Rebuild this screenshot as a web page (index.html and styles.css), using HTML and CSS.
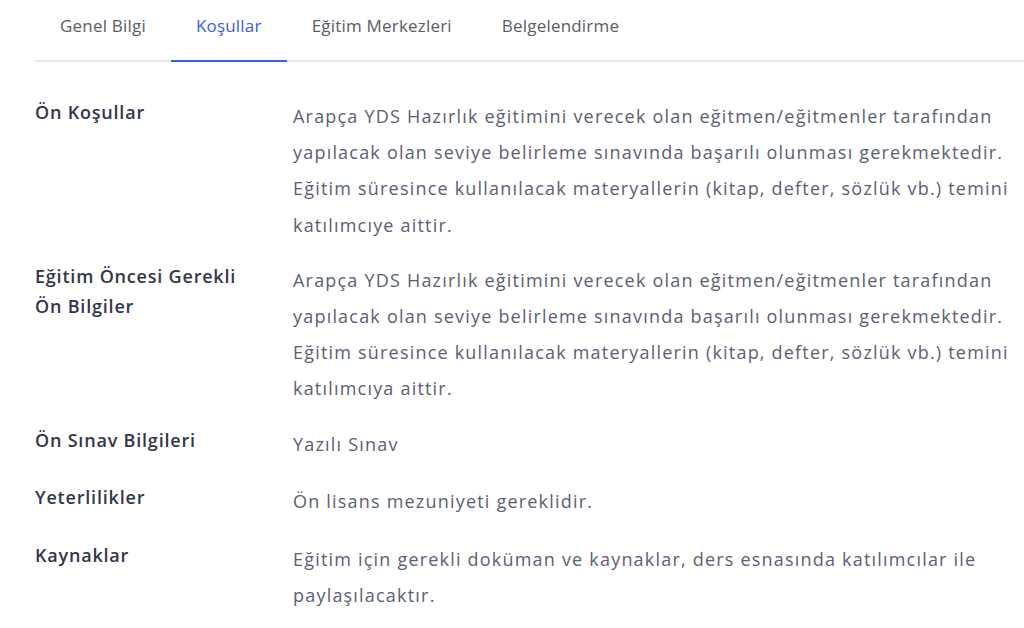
FILE: index.html
```html
<!DOCTYPE html>
<html lang="tr">
<head>
<meta charset="utf-8">
<link rel="stylesheet" href="styles.css">
</head>
<body>
<div class="page">
  <nav class="tabs">
    <div class="tab">Genel Bilgi</div>
    <div class="tab active">Koşullar</div>
    <div class="tab">Eğitim Merkezleri</div>
    <div class="tab">Belgelendirme</div>
  </nav>
  <div class="rows">
    <div class="row">
      <div class="label">Ön Koşullar</div>
      <div class="value">Arapça YDS Hazırlık eğitimini verecek olan eğitmen/eğitmenler tarafından yapılacak olan seviye belirleme sınavında başarılı olunması gerekmektedir. Eğitim süresince kullanılacak materyallerin (kitap, defter, sözlük vb.) temini katılımcıye aittir.</div>
    </div>
    <div class="row">
      <div class="label">Eğitim Öncesi Gerekli<br>Ön Bilgiler</div>
      <div class="value">Arapça YDS Hazırlık eğitimini verecek olan eğitmen/eğitmenler tarafından yapılacak olan seviye belirleme sınavında başarılı olunması gerekmektedir. Eğitim süresince kullanılacak materyallerin (kitap, defter, sözlük vb.) temini katılımcıya aittir.</div>
    </div>
    <div class="row">
      <div class="label">Ön Sınav Bilgileri</div>
      <div class="value">Yazılı Sınav</div>
    </div>
    <div class="row">
      <div class="label">Yeterlilikler</div>
      <div class="value">Ön lisans mezuniyeti gereklidir.</div>
    </div>
    <div class="row">
      <div class="label">Kaynaklar</div>
      <div class="value">Eğitim için gerekli doküman ve kaynaklar, ders esnasında katılımcılar ile paylaşılacaktır.</div>
    </div>
  </div>
</div>
</body>
</html>
```

FILE: styles.css
```css
html, body {
  margin: 0;
  padding: 0;
  background: #ffffff;
}
body {
  font-family: "Open Sans", "Liberation Sans", sans-serif;
}
.page {
  padding-left: 35px;
}
.tabs {
  display: flex;
  height: 62px;
  box-sizing: border-box;
  border-bottom: 2px solid #e6e7e9;
}
.tab {
  padding: 14px 25px 0;
  font-size: 17px;
  letter-spacing: 0.2px;
  color: #5c5c66;
  margin-bottom: -2px;
  border-bottom: 2px solid transparent;
  line-height: 24px;
}
.tab.active {
  color: #3b5ce0;
  border-bottom-color: #3b5ce0;
}
.rows {
  padding-top: 36px;
  width: 975px;
}
.row {
  display: grid;
  grid-template-columns: 258px 1fr;
  margin-bottom: 19px;
  min-height: 38.5px;
}
.label {
  font-size: 18px;
  font-weight: 600;
  letter-spacing: 0.8px;
  color: #33364a;
  line-height: 30px;
  margin-top: -1px;
}
.value {
  font-size: 18px;
  color: #5b6074;
  line-height: 36.2px;
  letter-spacing: 1.2px;
}
```
